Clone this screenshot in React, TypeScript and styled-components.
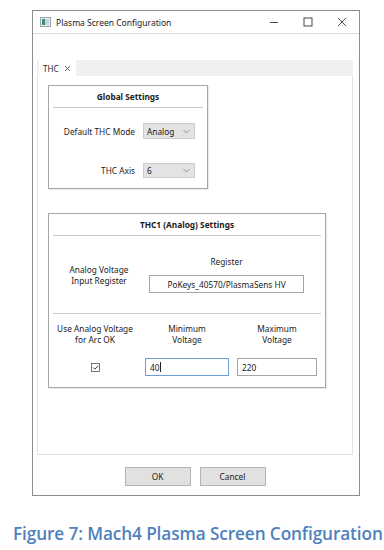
import React from "react";
import styled, { createGlobalStyle } from "styled-components";

const Global = createGlobalStyle`
  html, body { margin: 0; padding: 0; background: #ffffff; }
  body { font-family: "Noto Sans", "Open Sans", sans-serif; color: #1a1a1a; }
`;

const Page = styled.div`
  width: 384px;
  height: 550px;
  display: flex;
  flex-direction: column;
  align-items: flex-start;
  padding-top: 10px;
  box-sizing: border-box;
`;

const Window = styled.div`
  margin-left: 32px;
  width: 328px;
  height: 486px;
  border: 1px solid #8c8c8c;
  box-sizing: border-box;
  display: flex;
  flex-direction: column;
  background: #ffffff;
`;

const TitleBar = styled.div`
  height: 23px;
  border-bottom: 1px solid #dcdcdc;
  display: flex;
  align-items: center;
  padding-left: 7px;
  box-sizing: border-box;
  font-size: 8.5px;
  color: #222;
`;

const TitleText = styled.span`
  margin-left: 5px;
  flex: 1;
`;

const WinBtn = styled.div`
  width: 34px;
  height: 22px;
  display: flex;
  align-items: center;
  justify-content: center;
`;

const Body = styled.div`
  flex: 1;
  display: flex;
  flex-direction: column;
  padding: 26px 6px 0 4px;
`;

const TabStrip = styled.div`
  height: 16px;
  background: #f0f0f0;
  display: flex;
  align-items: stretch;
  padding-left: 2px;
`;

const Tab = styled.div`
  background: #ffffff;
  display: flex;
  align-items: center;
  padding: 0 5px 0 4px;
  gap: 6px;
  font-size: 8px;
  color: #222;
`;

const Panel = styled.div`
  height: 379px;
  border: 1px solid #e2e2e2;
  border-top: none;
  box-sizing: border-box;
  padding: 9px 0 0 10px;
  display: flex;
  flex-direction: column;
  align-items: flex-start;
  gap: 24px;
`;

const GroupBox = styled.div<{ $w: number; $h: number }>`
  width: ${(p) => p.$w}px;
  height: ${(p) => p.$h}px;
  border: 1px solid #a6a6a6;
  box-shadow: 1px 1px 1px rgba(0, 0, 0, 0.08);
  box-sizing: border-box;
  display: flex;
  flex-direction: column;
  font-size: 8.3px;
  color: #1a1a1a;
`;

const GroupTitle = styled.div`
  font-weight: bold;
  text-align: center;
  height: 21px;
  line-height: 21px;
  margin: 0 4px;
  border-bottom: 1px solid #c8c8c8;
`;

const Separator = styled.div`
  height: 1px;
  background: #c8c8c8;
  margin: 0 4px;
`;

const FieldRow = styled.div<{ $top: number }>`
  display: grid;
  grid-template-columns: 86px 52px;
  column-gap: 8px;
  align-items: center;
  margin-top: ${(p) => p.$top}px;
`;

const Label = styled.div`
  text-align: right;
`;

const Select = styled.div<{ $h: number }>`
  height: ${(p) => p.$h}px;
  background: #e3e3e3;
  border: 1px solid #cdcdcd;
  box-sizing: border-box;
  display: flex;
  align-items: center;
  justify-content: space-between;
  padding: 0 4px 0 3px;
  font-size: 8.3px;
`;

const RegisterSection = styled.div`
  height: 77px;
  display: grid;
  grid-template-columns: 100px 155px;
  align-items: start;
`;

const CenterText = styled.div`
  text-align: center;
  line-height: 11px;
`;

const RegisterLeft = styled(CenterText)`
  margin-top: 28px;
`;

const RegisterRight = styled.div`
  display: flex;
  flex-direction: column;
  align-items: stretch;
  gap: 8px;
  margin-top: 20px;
`;

const TextBox = styled.div<{ $focus?: boolean; $center?: boolean }>`
  height: 18px;
  border: 1px solid ${(p) => (p.$focus ? "#6d9fd6" : "#a5a5a5")};
  box-sizing: border-box;
  background: #fff;
  display: flex;
  align-items: center;
  justify-content: ${(p) => (p.$center ? "center" : "flex-start")};
  padding: 0 4px;
  font-size: 8.3px;
`;

const Caret = styled.span`
  display: inline-block;
  width: 1px;
  height: 10px;
  background: #222;
`;

const ArcGrid = styled.div`
  display: grid;
  grid-template-columns: 92px 84px 84px;
  column-gap: 4px;
  margin-top: 9px;
  row-gap: 13px;
  & > :nth-child(3n) { margin-left: 4px; }
`;

const CheckCell = styled.div`
  display: flex;
  align-items: center;
  justify-content: center;
  height: 18px;
`;

const ButtonRow = styled.div`
  display: flex;
  justify-content: center;
  gap: 9px;
  margin-top: 12px;
`;

const Button = styled.div`
  width: 66px;
  height: 19px;
  background: #e1e1e1;
  border: 1px solid #b4b4b4;
  box-sizing: border-box;
  display: flex;
  align-items: center;
  justify-content: center;
  font-size: 8.3px;
  color: #222;
`;

const Caption = styled.div`
  width: 384px;
  margin-top: 27px;
  padding-left: 13px;
  box-sizing: border-box;
  white-space: nowrap;
  font-family: "Open Sans", "Noto Sans", sans-serif;
  font-weight: 600;
  font-size: 17.2px;
  line-height: 22px;
  letter-spacing: -0.1px;
  color: #4f81bd;
`;

const Chevron = () => (
  <svg width="7" height="5" viewBox="0 0 7 5">
    <path d="M0.5 1 L3.5 4 L6.5 1" fill="none" stroke="#888" strokeWidth="0.9" />
  </svg>
);

export default function App() {
  return (
    <>
      <Global />
      <Page>
        <Window>
          <TitleBar>
            <svg width="11" height="10" viewBox="0 0 11 10">
              <rect x="0.5" y="0.5" width="10" height="9" fill="#e8eef2" stroke="#9aa6ae" />
              <rect x="2" y="2" width="3" height="6" fill="#3d8a78" />
              <rect x="5" y="2" width="4" height="6" fill="#c9d5dc" />
            </svg>
            <TitleText>Plasma Screen Configuration</TitleText>
            <WinBtn>
              <svg width="10" height="10" viewBox="0 0 10 10">
                <path d="M1 5.5 H9" stroke="#333" strokeWidth="0.9" />
              </svg>
            </WinBtn>
            <WinBtn>
              <svg width="10" height="10" viewBox="0 0 10 10">
                <rect x="1" y="1" width="8" height="8" fill="none" stroke="#333" strokeWidth="0.9" />
              </svg>
            </WinBtn>
            <WinBtn>
              <svg width="10" height="10" viewBox="0 0 10 10">
                <path d="M1 1 L9 9 M9 1 L1 9" stroke="#333" strokeWidth="0.9" />
              </svg>
            </WinBtn>
          </TitleBar>
          <Body>
            <TabStrip>
              <Tab>
                THC
                <svg width="7" height="7" viewBox="0 0 7 7">
                  <path d="M1 1 L6 6 M6 1 L1 6" stroke="#555" strokeWidth="0.9" />
                </svg>
              </Tab>
            </TabStrip>
            <Panel>
              <GroupBox $w={160} $h={104}>
                <GroupTitle>Global Settings</GroupTitle>
                <FieldRow $top={15}>
                  <Label>Default THC Mode</Label>
                  <Select $h={16}>
                    Analog <Chevron />
                  </Select>
                </FieldRow>
                <FieldRow $top={24}>
                  <Label>THC Axis</Label>
                  <Select $h={15}>
                    6 <Chevron />
                  </Select>
                </FieldRow>
              </GroupBox>
              <GroupBox $w={278} $h={175}>
                <GroupTitle>THC1 (Analog) Settings</GroupTitle>
                <RegisterSection>
                  <RegisterLeft>
                    Analog Voltage
                    <br />
                    Input Register
                  </RegisterLeft>
                  <RegisterRight>
                    <CenterText>Register</CenterText>
                    <TextBox $center>PoKeys_40570/PlasmaSens HV</TextBox>
                  </RegisterRight>
                </RegisterSection>
                <Separator />
                <ArcGrid>
                  <CenterText>
                    Use Analog Voltage
                    <br />
                    for Arc OK
                  </CenterText>
                  <CenterText>
                    Minimum
                    <br />
                    Voltage
                  </CenterText>
                  <CenterText>
                    Maximum
                    <br />
                    Voltage
                  </CenterText>
                  <CheckCell>
                    <svg width="9" height="9" viewBox="0 0 9 9">
                      <rect x="0.5" y="0.5" width="8" height="8" fill="#fff" stroke="#555" strokeWidth="0.8" />
                      <path d="M2 4.5 L3.8 6.3 L7.2 2.6" fill="none" stroke="#333" strokeWidth="0.9" />
                    </svg>
                  </CheckCell>
                  <TextBox $focus>
                    40
                    <Caret />
                  </TextBox>
                  <TextBox>220</TextBox>
                </ArcGrid>
              </GroupBox>
            </Panel>
            <ButtonRow>
              <Button>OK</Button>
              <Button>Cancel</Button>
            </ButtonRow>
          </Body>
        </Window>
        <Caption>Figure 7: Mach4 Plasma Screen Configuration</Caption>
      </Page>
    </>
  );
}
